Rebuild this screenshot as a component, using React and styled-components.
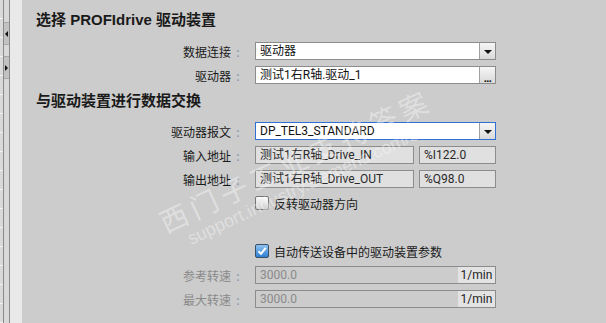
import React from 'react';
import styled, { createGlobalStyle } from 'styled-components';

const GlobalStyle = createGlobalStyle`
    html, body {
        margin: 0;
        padding: 0;
        background: #cccccc;
    }
    body {
        font-family: 'Liberation Sans', 'Noto Sans CJK SC', sans-serif;
        font-size: 12px;
        color: #000;
    }
`;

const Page = styled.div`
    display: flex;
    width: 606px;
    height: 323px;
    overflow: hidden;
    background: #cccccc;
`;

const Rail = styled.div`
    width: 3px;
    background: repeating-linear-gradient(
        to bottom,
        #d9d9d9 0px,
        #d9d9d9 18px,
        #f4f4f4 18px,
        #f4f4f4 19px
    );
`;

const RailLine = styled.div`
    width: 1px;
    background: #8a8a8a;
`;

const ButtonColumn = styled.div`
    width: 5px;
    background: #d8d8d8;
    display: flex;
    flex-direction: column;
    padding-top: 22px;
    gap: 11px;
`;

const ScrollButton = styled.div`
    height: 23px;
    background: #c2c2c2;
    border-top: 1px solid #a8a8a8;
    border-bottom: 1px solid #a8a8a8;
    box-sizing: border-box;
    display: flex;
    align-items: center;
    justify-content: center;
    padding-top: 1px;
`;

const Arrow = styled.div`
    width: 0;
    height: 0;
    border-top: 3px solid transparent;
    border-bottom: 3px solid transparent;
    ${(p) => (p.$dir === 'left' ? 'border-right: 3px solid #111;' : 'border-left: 3px solid #111;')}
`;

const Gutter = styled.div`
    width: 12px;
    background: #e9e9e9;
`;

const Main = styled.div`
    position: relative;
    flex: 1;
    padding: 10px 0 0 14px;
`;

const Heading = styled.div`
    font-family: 'Liberation Sans', 'Noto Sans CJK SC', sans-serif;
    font-size: 15px;
    font-weight: bold;
    line-height: 20px;
    color: #1a1a1a;
    margin-top: ${(p) => p.$top || 0}px;
    margin-bottom: ${(p) => p.$bottom || 0}px;
`;

const Form = styled.div`
    display: grid;
    grid-template-columns: 207px 241px;
    column-gap: 12px;
    row-gap: 6px;
    grid-auto-rows: 18px;
`;

const Label = styled.div`
    display: flex;
    justify-content: flex-end;
    align-items: center;
    font-family: 'Noto Sans CJK SC', sans-serif;
    font-size: 12px;
    color: ${(p) => (p.$muted ? '#8a8a8a' : '#1a1a1a')};
`;

const Colon = styled.span`
    width: 10px;
    text-align: center;
    color: #7f96b0;
    margin-left: 2px;
`;

const Field = styled.div`
    grid-column: 2;
    display: flex;
    box-sizing: border-box;
    height: 18px;
    border: 1px solid ${(p) => (p.$active ? '#2f6fd6' : '#8c8c8c')};
    background: ${(p) => p.$bg || '#fff'};
    font-family: Roboto, 'Noto Sans CJK SC', sans-serif;
    font-size: 12px;
    color: ${(p) => p.$color || '#111'};
`;

const FieldText = styled.div`
    flex: 1;
    padding-left: 4px;
    line-height: 16px;
    white-space: nowrap;
    overflow: hidden;
`;

const SideButton = styled.div`
    width: 16px;
    box-sizing: border-box;
    border-left: 1px solid #a0a0a0;
    background: linear-gradient(to bottom, #f6f6f6, #d9d9d9);
    display: flex;
    align-items: center;
    justify-content: center;
`;

const DownArrow = styled.div`
    width: 0;
    height: 0;
    border-left: 4px solid transparent;
    border-right: 4px solid transparent;
    border-top: 4px solid #111;
    margin-top: 1px;
`;

const Dots = styled.div`
    font-family: 'Liberation Sans', sans-serif;
    font-weight: bold;
    font-size: 11px;
    letter-spacing: -0.5px;
    margin-top: 5px;
    color: #111;
`;

const Pair = styled.div`
    grid-column: 2;
    display: flex;
    gap: 5px;
`;

const AddressField = styled(Field)`
    width: ${(p) => p.$width}px;
    flex: ${(p) => (p.$width ? 'none' : 1)};
    color: #2a2a2a;
`;

const Unit = styled.div`
    width: 37px;
    background: #e3e3e3;
    color: #222;
    line-height: 16px;
    text-align: center;
    font-family: Roboto, sans-serif;
`;

const CheckRow = styled.label`
    grid-column: 2;
    display: flex;
    align-items: center;
    gap: 5px;
    font-family: 'Noto Sans CJK SC', sans-serif;
    font-size: 12px;
    color: #1a1a1a;
`;

const Box = styled.span`
    width: 14px;
    height: 14px;
    box-sizing: border-box;
    border-radius: 2px;
    border: 1px solid ${(p) => (p.$checked ? '#3a4f66' : '#767676')};
    background: ${(p) =>
        p.$checked
            ? 'linear-gradient(to bottom, #8ec3f2, #2f7fd2)'
            : 'linear-gradient(to bottom, #fafafa, #cfcfcf)'};
    display: flex;
    align-items: center;
    justify-content: center;
`;

const Spacer = styled.div`
    grid-column: 1 / span 2;
`;

const Watermark = styled.div`
    position: absolute;
    left: 278px;
    top: 170px;
    transform: translate(-50%, -50%) rotate(-25deg);
    display: flex;
    flex-direction: column;
    align-items: center;
    pointer-events: none;
    color: rgba(255, 255, 255, 0.38);
    white-space: nowrap;
`;

const WatermarkCn = styled.div`
    font-family: 'Noto Sans CJK SC', sans-serif;
    font-size: 28px;
    letter-spacing: 5px;
    line-height: 32px;
`;

const WatermarkUrl = styled.div`
    font-family: 'Liberation Sans', sans-serif;
    font-size: 18px;
    line-height: 22px;
`;

const Check = () => (
    <svg width="10" height="10" viewBox="0 0 10 10">
        <path d="M1.5 5.2 L4 7.8 L8.7 1.8" fill="none" stroke="#fff" strokeWidth="2" />
    </svg>
);

const FormLabel = ({ children, muted }) => (
    <Label $muted={muted}>
        {children}
        <Colon>:</Colon>
    </Label>
);

const App = () => (
    <>
        <GlobalStyle />
        <Page>
            <Rail />
            <RailLine />
            <ButtonColumn>
                <ScrollButton>
                    <Arrow $dir="left" />
                </ScrollButton>
                <ScrollButton>
                    <Arrow $dir="right" />
                </ScrollButton>
            </ButtonColumn>
            <RailLine />
            <Gutter />
            <Main>
                <Heading $bottom={12}>选择 PROFIdrive 驱动装置</Heading>
                <Form>
                    <FormLabel>数据连接</FormLabel>
                    <Field>
                        <FieldText>驱动器</FieldText>
                        <SideButton>
                            <DownArrow />
                        </SideButton>
                    </Field>
                    <FormLabel>驱动器</FormLabel>
                    <Field>
                        <FieldText>测试1右R轴.驱动_1</FieldText>
                        <SideButton>
                            <Dots>...</Dots>
                        </SideButton>
                    </Field>
                </Form>
                <Heading $top={7} $bottom={11}>与驱动装置进行数据交换</Heading>
                <Form>
                    <FormLabel>驱动器报文</FormLabel>
                    <Field $active>
                        <FieldText>DP_TEL3_STANDARD</FieldText>
                        <SideButton>
                            <DownArrow />
                        </SideButton>
                    </Field>
                    <FormLabel>输入地址</FormLabel>
                    <Pair>
                        <AddressField $width={159} $bg="#e0e0e0">
                            <FieldText>测试1右R轴_Drive_IN</FieldText>
                        </AddressField>
                        <AddressField $bg="#e0e0e0">
                            <FieldText>%I122.0</FieldText>
                        </AddressField>
                    </Pair>
                    <FormLabel>输出地址</FormLabel>
                    <Pair>
                        <AddressField $width={159} $bg="#e0e0e0">
                            <FieldText>测试1右R轴_Drive_OUT</FieldText>
                        </AddressField>
                        <AddressField $bg="#e0e0e0">
                            <FieldText>%Q98.0</FieldText>
                        </AddressField>
                    </Pair>
                    <CheckRow>
                        <Box />
                        反转驱动器方向
                    </CheckRow>
                    <Spacer />
                    <CheckRow>
                        <Box $checked>
                            <Check />
                        </Box>
                        自动传送设备中的驱动装置参数
                    </CheckRow>
                    <FormLabel muted>参考转速</FormLabel>
                    <Field $bg="#cccccc" $color="#8a8a8a">
                        <FieldText>3000.0</FieldText>
                        <Unit>1/min</Unit>
                    </Field>
                    <FormLabel muted>最大转速</FormLabel>
                    <Field $bg="#cccccc" $color="#8a8a8a">
                        <FieldText>3000.0</FieldText>
                        <Unit>1/min</Unit>
                    </Field>
                </Form>
                <Watermark>
                    <WatermarkCn>西门子工业支持答案</WatermarkCn>
                    <WatermarkUrl>support.industry.siemens.com/cs</WatermarkUrl>
                </Watermark>
            </Main>
        </Page>
    </>
);

export default App;
